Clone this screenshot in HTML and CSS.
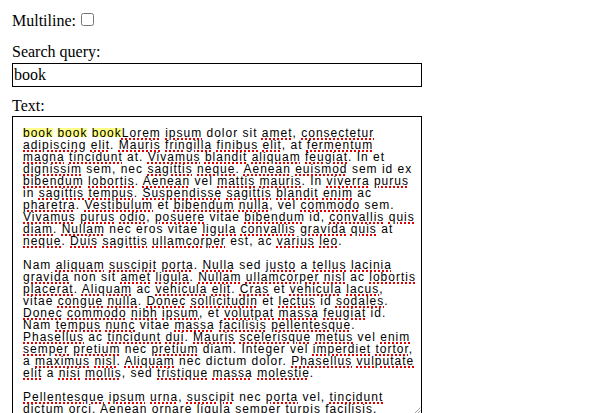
FILE: index.html
```html
<!DOCTYPE html>
<html>
<head>
<meta charset="utf-8">
<link rel="stylesheet" href="styles.css">
</head>
<body>
<div class="form">
  <div class="check-row"><span class="lbl">Multiline:</span><input class="check" type="checkbox"></div>
  <div class="lbl search-lbl">Search query:</div>
  <div class="search-input">book</div>
  <div class="lbl text-lbl">Text:</div>
  <div class="editor">
    <div class="editor-text">
<div class="para">
<mark class="hl">book</mark> <mark class="hl">book</mark> <mark class="hl">book</mark><u>Lorem</u> <u>ipsum</u> dolor sit <u>amet</u>, <u>consectetur</u><br>
<u>adipiscing</u> <u>elit</u>. <u>Mauris</u> <u>fringilla</u> <u>finibus</u> <u>elit</u>, at <u>fermentum</u><br>
<u>magna</u> <u>tincidunt</u> at. <u>Vivamus</u> <u>blandit</u> <u>aliquam</u> <u>feugiat</u>. In et<br>
<u>dignissim</u> sem, nec <u>sagittis</u> <u>neque</u>. <u>Aenean</u> <u>euismod</u> sem id ex<br>
<u>bibendum</u> <u>lobortis</u>. <u>Aenean</u> vel <u>mattis</u> <u>mauris</u>. In <u>viverra</u> <u>purus</u><br>
in <u>sagittis</u> <u>tempus</u>. <u>Suspendisse</u> <u>sagittis</u> <u>blandit</u> <u>enim</u> ac<br>
<u>pharetra</u>. <u>Vestibulum</u> et <u>bibendum</u> <u>nulla</u>, vel <u>commodo</u> sem.<br>
<u>Vivamus</u> <u>purus</u> <u>odio</u>, <u>posuere</u> vitae <u>bibendum</u> id, <u>convallis</u> <u>quis</u><br>
<u>diam</u>. <u>Nullam</u> nec eros vitae <u>ligula</u> <u>convallis</u> <u>gravida</u> <u>quis</u> at<br>
<u>neque</u>. <u>Duis</u> <u>sagittis</u> <u>ullamcorper</u> est, ac <u>varius</u> <u>leo</u>.
</div>
<div class="para">
Nam <u>aliquam</u> <u>suscipit</u> <u>porta</u>. <u>Nulla</u> sed <u>justo</u> a <u>tellus</u> <u>lacinia</u><br>
<u>gravida</u> non sit <u>amet</u> <u>ligula</u>. <u>Nullam</u> <u>ullamcorper</u> <u>nisl</u> ac <u>lobortis</u><br>
<u>placerat</u>. <u>Aliquam</u> ac <u>vehicula</u> <u>elit</u>. <u>Cras</u> et <u>vehicula</u> <u>lacus</u>,<br>
vitae <u>congue</u> <u>nulla</u>. <u>Donec</u> <u>sollicitudin</u> et <u>lectus</u> id <u>sodales</u>.<br>
<u>Donec</u> <u>commodo</u> <u>nibh</u> <u>ipsum</u>, et <u>volutpat</u> <u>massa</u> <u>feugiat</u> id.<br>
Nam <u>tempus</u> <u>nunc</u> vitae <u>massa</u> <u>facilisis</u> <u>pellentesque</u>.<br>
<u>Phasellus</u> ac <u>tincidunt</u> <u>dui</u>. <u>Mauris</u> <u>scelerisque</u> <u>metus</u> vel <u>enim</u><br>
<u>semper</u> <u>pretium</u> nec <u>pretium</u> diam. Integer vel <u>imperdiet</u> <u>tortor</u>,<br>
a <u>maximus</u> <u>nisl</u>. <u>Aliquam</u> nec dictum dolor. <u>Phasellus</u> <u>vulputate</u><br>
<u>elit</u> a <u>nisi</u> <u>mollis</u>, sed <u>tristique</u> <u>massa</u> <u>molestie</u>.
</div>
<div class="para">
<u>Pellentesque</u> <u>ipsum</u> <u>urna</u>, <u>suscipit</u> nec <u>porta</u> vel, <u>tincidunt</u><br>
dictum <u>orci</u>. <u>Aenean</u> <u>ornare</u> <u>ligula</u> <u>semper</u> <u>turpis</u> <u>facilisis</u>,
</div>
    </div>
    <svg class="grip" width="8" height="8" viewBox="0 0 8 8"><path d="M7.5 1.5 L1.5 7.5 M7.5 4.5 L4.5 7.5" stroke="#a0a0a0" stroke-width="1" fill="none"/></svg>
  </div>
</div>
</body>
</html>
```

FILE: styles.css
```css
html, body {
  background: #fff;
}
body {
  margin: 8px;
  font-family: "Liberation Serif", "Times New Roman", serif;
  font-size: 16px;
  color: #000;
}
.form {
  display: flex;
  flex-direction: column;
  align-items: flex-start;
  padding-left: 4px;
}
.lbl {
  line-height: 18px;
}
.check-row {
  margin-top: 4px;
  display: flex;
  align-items: flex-start;
}
.check {
  margin: 1px 0 0 5px;
  width: 13px;
  height: 13px;
}
.search-lbl {
  margin-top: 13px;
}
.search-input {
  margin-top: 2px;
  box-sizing: border-box;
  width: 410px;
  height: 24px;
  border: 1px solid #000;
  padding: 2px 1px 0 1px;
  line-height: 18px;
}
.text-lbl {
  margin-top: 10px;
}
.editor {
  position: relative;
  margin-top: 1px;
  box-sizing: border-box;
  width: 410px;
  height: 299px;
  border: 1px solid #000;
  padding: 10px;
  overflow: hidden;
}
.editor-text {
  font-family: "Liberation Sans", Arial, sans-serif;
  font-size: 12px;
  line-height: 12px;
  letter-spacing: 1px;
  white-space: nowrap;
  color: #000;
}
.para + .para {
  margin-top: 12px;
}
.editor-text u {
  text-decoration: underline dotted #e00000;
  text-decoration-thickness: 2px;
  text-underline-offset: 1px;
}
.hl {
  color: #000;
  background: linear-gradient(transparent 2px, #ffff88 2px, #ffff88 11px, transparent 11px);
}
.grip {
  position: absolute;
  right: 0;
  bottom: 0;
}
```
